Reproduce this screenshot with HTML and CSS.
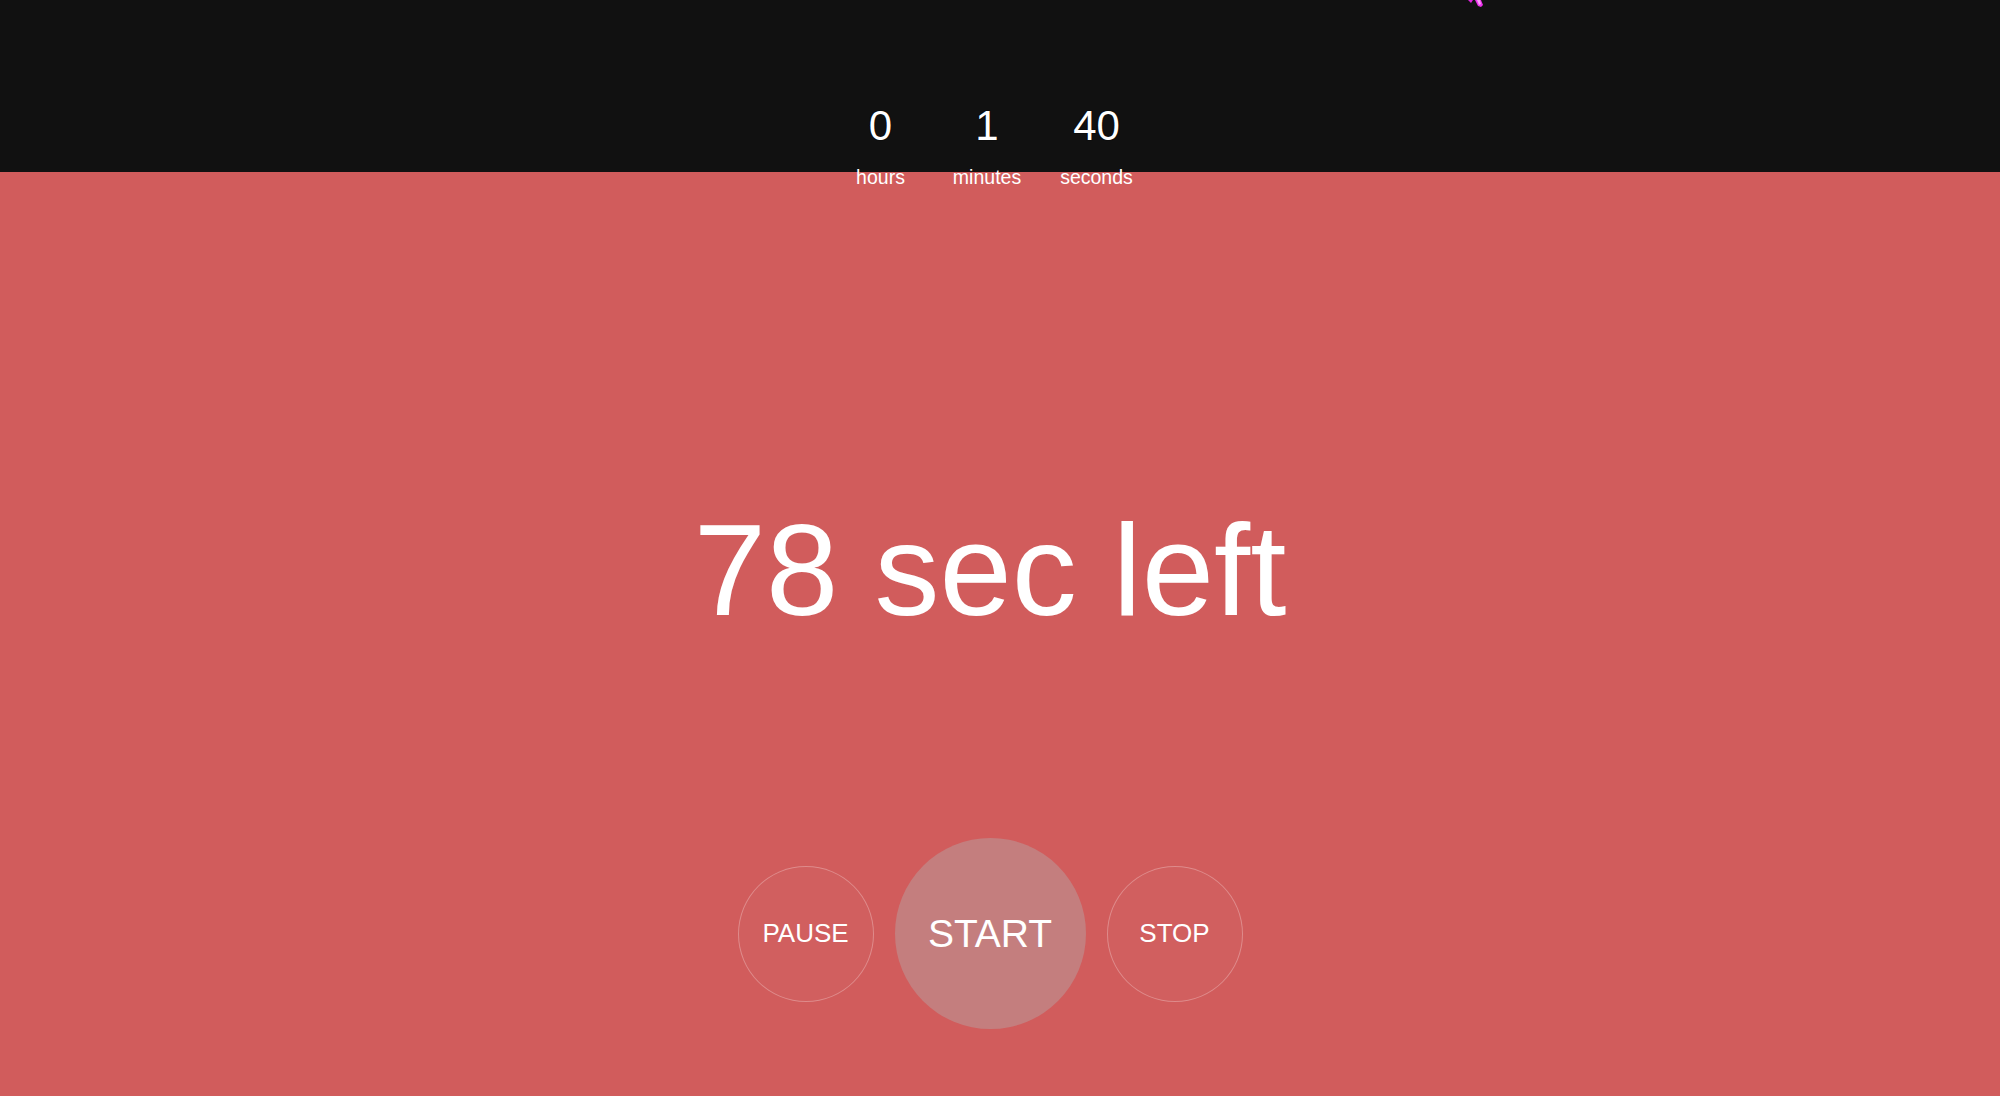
FILE: index.html
```html
<!DOCTYPE html>
<html lang="en">
<head>
<meta charset="utf-8">
<title>Timer</title>
<link rel="stylesheet" href="styles.css">
</head>
<body>
<header class="topbar">
  <div class="fields">
    <div class="field field-hours">
      <div class="num">0</div>
      <div class="unit">hours</div>
    </div>
    <div class="field field-minutes">
      <div class="num">1</div>
      <div class="unit">minutes</div>
    </div>
    <div class="field field-seconds">
      <div class="num">40</div>
      <div class="unit">seconds</div>
    </div>
  </div>
  <svg class="cursor" width="20" height="10" viewBox="0 0 20 10">
    <path d="M1 0 L6 0 L4 3 Z" fill="#e020e0"/>
    <path d="M8 0 L14 0 L16 5 L14 7 L11 6 Z" fill="#ee30ee"/>
    <path d="M10 0 L13 0 L14 4 L12 5 Z" fill="#f6a0f6"/>
  </svg>
</header>
<main class="stage">
  <div class="remaining">78 sec left</div>
  <div class="controls">
    <button class="btn btn-small">PAUSE</button>
    <button class="btn btn-big">START</button>
    <button class="btn btn-small btn-stop">STOP</button>
  </div>
</main>
</body>
</html>
```

FILE: styles.css
```css
html, body {
  margin: 0;
  padding: 0;
}
body {
  width: 2000px;
  height: 1096px;
  overflow: hidden;
  background: #d15c5c;
  font-family: "Liberation Sans", Arial, sans-serif;
  color: #fff;
}
.topbar {
  position: relative;
  height: 172px;
  background: #111111;
}
.fields {
  width: 1980px;
  display: flex;
  justify-content: center;
  padding-top: 102px;
}
.field {
  display: flex;
  flex-direction: column;
  align-items: center;
}
.field-hours { width: 113px; }
.field-minutes { width: 100px; }
.field-seconds { width: 119px; }
.num {
  font-size: 42px;
  line-height: 48px;
  height: 48px;
  text-shadow: 0 0 1px #000, 0 0 1px #000;
}
.unit {
  margin-top: 15px;
  font-size: 19.5px;
  line-height: 24px;
  position: relative;
  z-index: 1;
}
.cursor {
  position: absolute;
  left: 1467px;
  top: 0;
}
.stage {
  width: 1980px;
  display: flex;
  flex-direction: column;
  align-items: center;
}
.remaining {
  margin-top: 333px;
  font-size: 130px;
  line-height: 130px;
  height: 130px;
  white-space: nowrap;
}
.controls {
  margin-top: 203px;
  display: flex;
  align-items: center;
  gap: 21px;
}
.btn {
  box-sizing: border-box;
  border-radius: 50%;
  font-family: "Liberation Sans", Arial, sans-serif;
  color: #fff;
  padding: 0;
  display: flex;
  align-items: center;
  justify-content: center;
  cursor: pointer;
}
.btn-small {
  width: 136px;
  height: 136px;
  background: rgba(255, 255, 255, 0.02);
  border: 1px solid rgba(255, 255, 255, 0.28);
  font-size: 26px;
}
.btn-big {
  width: 191px;
  height: 191px;
  background: #c47e7e;
  border: none;
  font-size: 39px;
}
```
